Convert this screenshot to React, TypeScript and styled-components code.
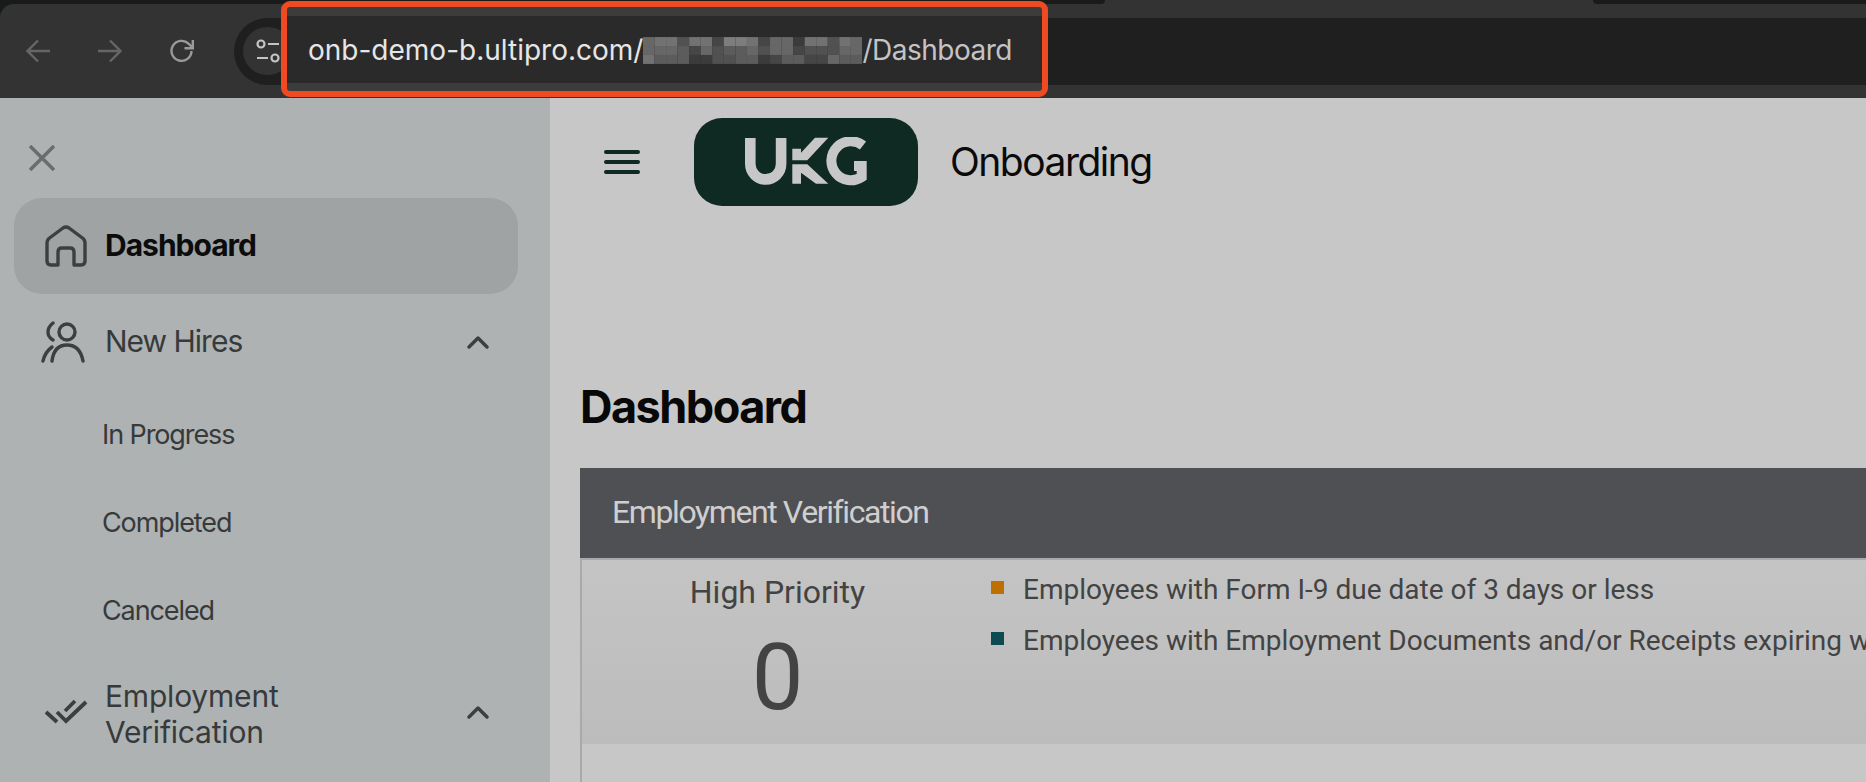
import React from 'react';
import styled, { createGlobalStyle } from 'styled-components';

const GlobalStyle = createGlobalStyle`
  html, body {
    margin: 0;
    padding: 0;
    height: 100%;
    overflow: hidden;
    background: #c7c7c7;
  }
  * {
    box-sizing: border-box;
  }
`;

const Page = styled.div`
  width: 1866px;
  height: 782px;
  display: flex;
  flex-direction: column;
  overflow: hidden;
`;

const BrowserBar = styled.div`
  height: 98px;
  flex-shrink: 0;
  background: #191b1b;
  display: flex;
  flex-direction: column;
`;

const TabEdge = styled.div`
  height: 4px;
  flex-shrink: 0;
  background: #333333;
  display: flex;
  justify-content: space-between;
`;

const TabPiece = styled.div<{ $width: number; $side: 'left' | 'right' }>`
  width: ${p => p.$width}px;
  background: #191b1b;
  border-radius: ${p => (p.$side === 'left' ? '0 0 4px 0' : '0 0 0 4px')};
`;

const Toolbar = styled.div`
  flex: 1;
  background: #333333;
  border-radius: 14px 0 0 0;
  display: flex;
  align-items: center;
  padding-left: 26px;
  position: relative;
`;

const NavIcon = styled.svg<{ $dim?: boolean }>`
  width: 24px;
  height: 24px;
  margin-right: 48px;
  fill: none;
  stroke: ${p => (p.$dim ? '#666666' : '#9a9a9a')};
  stroke-width: 2.4;
  flex-shrink: 0;
`;

const AddressBar = styled.div`
  flex: 1;
  height: 67px;
  margin-left: -8px;
  border-radius: 34px 0 0 34px;
  background: #1f1f1f;
  display: flex;
  align-items: center;
  padding-left: 9px;
`;

const SiteBadge = styled.div`
  width: 49px;
  height: 48px;
  border-radius: 50%;
  background: #333333;
  display: flex;
  align-items: center;
  justify-content: center;
  flex-shrink: 0;
`;

const Highlight = styled.div`
  position: absolute;
  left: 281px;
  top: -3px;
  width: 767px;
  height: 96px;
  border: 6px solid #f04a23;
  border-radius: 9px;
  background: linear-gradient(#3c3c3c 0 9px, #2a2a2a 9px 76px, #3c3c3c 76px);
  display: flex;
  align-items: center;
  padding: 2px 0 0 21px;
  font-family: Inter, 'Liberation Sans', sans-serif;
  font-size: 28px;
  color: #e6e6e6;
  white-space: nowrap;
`;

const UrlTail = styled.span`
  color: #c4c4c4;
  letter-spacing: -0.5px;
`;

const Mosaic = styled.svg`
  width: 219px;
  height: 27px;
  flex-shrink: 0;
`;

const Body = styled.div`
  flex: 1;
  display: flex;
  min-height: 0;
`;

const Sidebar = styled.aside`
  width: 550px;
  flex-shrink: 0;
  background: #aeb2b3;
  padding: 47px 32px 0 14px;
  font-family: Inter, 'Liberation Sans', sans-serif;
  color: #373a3a;
`;

const CloseIcon = styled.svg`
  display: block;
  width: 26px;
  height: 26px;
  margin: 0 0 27px 15px;
  stroke: #6a6d6d;
  stroke-width: 3.5;
  fill: none;
`;

const NavItem = styled.div<{ $active?: boolean; $tall?: boolean }>`
  height: ${p => (p.$tall ? '116px' : '96px')};
  border-radius: 28px;
  display: flex;
  align-items: center;
  gap: 17px;
  padding: 0 29px 0 27px;
  font-size: 30px;
  letter-spacing: ${p => (p.$tall ? '-0.2px' : '-1px')};
  line-height: 36px;
  background: ${p => (p.$active ? '#9fa3a4' : 'transparent')};
  color: ${p => (p.$active ? '#0c0c0c' : '#373a3a')};
  font-weight: ${p => (p.$active ? 700 : 400)};
`;

const NavGlyph = styled.svg`
  width: 50px;
  height: 50px;
  flex-shrink: 0;
  fill: none;
  stroke: #3c3f3f;
  stroke-width: 3.4;
  stroke-linecap: round;
  stroke-linejoin: round;
`;

const NavLabel = styled.span<{ $low?: boolean }>`
  flex: 1;
  margin-left: -3px;
  padding: ${p => (p.$low ? '3px 0 0' : '0 0 2px')};
`;

const Chevron = styled.svg`
  width: 22px;
  height: 14px;
  fill: none;
  stroke: #3c3f3f;
  stroke-width: 3.4;
  stroke-linecap: round;
  stroke-linejoin: round;
`;

const SubItem = styled.div`
  height: 88px;
  display: flex;
  align-items: center;
  padding-left: 88px;
  font-size: 27px;
  letter-spacing: -1.1px;
`;

const Main = styled.main`
  flex: 1;
  min-width: 0;
  overflow: hidden;
  padding: 20px 0 0 30px;
  font-family: Roboto, 'Liberation Sans', sans-serif;
`;

const AppHeader = styled.header`
  display: flex;
  align-items: center;
  height: 88px;
`;

const MenuIcon = styled.svg`
  width: 36px;
  height: 24px;
  margin: 0 54px 0 24px;
  stroke: #0f2a23;
  stroke-width: 4;
  stroke-linecap: round;
`;

const Logo = styled.div`
  width: 224px;
  height: 88px;
  border-radius: 28px;
  background: #0f2a23;
  display: flex;
  align-items: center;
  justify-content: center;
`;

const AppTitle = styled.div`
  margin-left: 32px;
  padding-bottom: 2px;
  font-family: Inter, 'Liberation Sans', sans-serif;
  font-size: 39px;
  letter-spacing: -1.5px;
  color: #0a0a0a;
`;

const PageTitle = styled.h1`
  margin: 177px 0 37px 0;
  height: 48px;
  line-height: 48px;
  font-family: Inter, 'Liberation Sans', sans-serif;
  font-size: 45px;
  font-weight: 700;
  letter-spacing: -1.5px;
  color: #080808;
`;

const Card = styled.section`
  border-left: 2px solid #a9a9a9;
  height: 400px;
`;

const CardHeader = styled.div`
  height: 92px;
  margin-left: -2px;
  padding: 0 0 2px 32px;
  background: #4f5054;
  border-bottom: 2px solid #a9a9a9;
  display: flex;
  align-items: center;
  font-size: 32px;
  letter-spacing: -1.4px;
  color: #cfcfcf;
`;

const CardBody = styled.div`
  height: 184px;
  background: linear-gradient(#c4c4c4, #bcbcbc);
  display: flex;
  color: #434343;
`;

const Priority = styled.div`
  width: 391px;
  flex-shrink: 0;
  display: flex;
  flex-direction: column;
  align-items: center;
  padding-top: 12px;
  margin-right: 18px;
`;

const PriorityLabel = styled.div`
  font-size: 32px;
  line-height: 40px;
`;

const PriorityCount = styled.div`
  margin-top: 16px;
  font-size: 92px;
  line-height: 100px;
`;

const Legend = styled.ul`
  list-style: none;
  margin: 0;
  padding: 4px 0 0 0;
  min-width: 0;
  white-space: nowrap;
`;

const LegendRow = styled.li`
  display: flex;
  align-items: center;
  height: 51px;
  gap: 19px;
  font-size: 28px;
`;

const LegendMark = styled.span<{ $color: string }>`
  width: 13px;
  height: 13px;
  margin-bottom: 5px;
  flex-shrink: 0;
  background: ${p => p.$color};
`;

const MOSAIC_ROWS = [
  [5, 6, 6, 3, 6, 6, 2, 7, 7, 6, 2, 5, 5, 1, 6, 6, 3, 6, 5],
  [5, 5, 5, 4, 2, 5, 3, 4, 4, 5, 3, 5, 5, 2, 3, 3, 3, 5, 5],
  [6, 4, 4, 4, 1, 1, 3, 3, 4, 4, 1, 2, 4, 4, 2, 2, 5, 4, 4],
];

const mosaicColor = (level: number) => {
  const grey = 0x30 + level * 11;
  return `rgb(${grey},${grey},${grey})`;
};

export default function App() {
  return (
    <Page>
      <GlobalStyle />
      <BrowserBar>
        <TabEdge>
          <TabPiece $side="left" $width={1105} />
          <TabPiece $side="right" $width={273} />
        </TabEdge>
        <Toolbar>
          <NavIcon viewBox="0 0 24 24" $dim>
            <path d="M24 12H2M12 1.5 1.5 12 12 22.5" />
          </NavIcon>
          <NavIcon viewBox="0 0 24 24" $dim>
            <path d="M0 12h22M12 1.5 22.5 12 12 22.5" />
          </NavIcon>
          <NavIcon viewBox="0 0 24 24">
            <path d="M21.5 12a10 10 0 1 1-3-7.3l4 3.8M22.8 1v8.3h-8.3" />
          </NavIcon>
          <AddressBar>
            <SiteBadge>
              <svg width="26" height="26" viewBox="0 0 26 26" fill="none" stroke="#c4c4c4" strokeWidth="2.2">
                <circle cx="6" cy="6" r="3.5" />
                <path d="M13 6h11M2 20h11" />
                <circle cx="20" cy="20" r="3.5" />
              </svg>
            </SiteBadge>
          </AddressBar>
          <Highlight>
            onb-demo-b.ultipro.com/
            <Mosaic viewBox="0 0 220 27">
              {MOSAIC_ROWS.map((row, y) =>
                row.map((level, x) => (
                  <rect key={`${x}-${y}`} x={x * 11.6} y={y * 9} width="11.6" height="9" fill={mosaicColor(level)} />
                )),
              )}
            </Mosaic>
            <UrlTail>/Dashboard</UrlTail>
          </Highlight>
        </Toolbar>
      </BrowserBar>
      <Body>
        <Sidebar>
          <CloseIcon viewBox="0 0 26 26">
            <path d="M1 1l24 24M25 1 1 25" />
          </CloseIcon>
          <NavItem $active>
            <NavGlyph viewBox="0 0 50 50">
              <path d="M6 22Q6 19 8.500 17L22 7Q25 5 28 7L41.500 17Q44 19 44 22V40Q44 44 40 44H33V31Q33 27 29 27H21Q17 27 17 31V44H10Q6 44 6 40Z" />
            </NavGlyph>
            <NavLabel>Dashboard</NavLabel>
          </NavItem>
          <NavItem>
            <NavGlyph viewBox="0 0 50 50">
              <circle cx="26" cy="15" r="8" />
              <path d="M12 6Q7 10 7 15Q7 20 12 23M11 44Q13 28 26 28Q39 28 42 44M2 44Q4 35 11 30" />
            </NavGlyph>
            <NavLabel>New Hires</NavLabel>
            <Chevron viewBox="0 0 22 14">
              <path d="M2 12 11 3l9 9" />
            </Chevron>
          </NavItem>
          <SubItem>In Progress</SubItem>
          <SubItem>Completed</SubItem>
          <SubItem>Canceled</SubItem>
          <NavItem $tall>
            <NavGlyph viewBox="0 0 50 50">
              <path strokeLinecap="butt" strokeLinejoin="miter" strokeWidth="3.8" d="M5 25 16 35M16 25l9 9 20-19M24 24 34 14" />
            </NavGlyph>
            <NavLabel $low>
              Employment
              <br />
              Verification
            </NavLabel>
            <Chevron viewBox="0 0 22 14">
              <path d="M2 12 11 3l9 9" />
            </Chevron>
          </NavItem>
        </Sidebar>
        <Main>
          <AppHeader>
            <MenuIcon viewBox="0 0 36 24">
              <path d="M2 2h32M2 12h32M2 22h32" />
            </MenuIcon>
            <Logo>
              <svg width="124" height="50" viewBox="0 0 124 50">
                <path fill="none" stroke="#c7c7c7" strokeWidth="10.600" d="M6.300 1V27a15.400 15.400 0 0 0 30.800 0V1" />
                <polygon fill="#c7c7c7" points="48.300,11.700 57,11.700 57,15.700 71,0.700 84.300,0.700 63.300,23.300 48.300,23.300" />
                <polygon fill="#c7c7c7" points="48.300,27.300 63.300,27.300 84.300,46.700 72,46.700 57,35.700 57,46.700 48.300,46.700" />
                <path fill="none" stroke="#c7c7c7" strokeWidth="10" d="M119 8.500A19.500 19.500 0 1 0 117.700 40V29H110" />
              </svg>
            </Logo>
            <AppTitle>Onboarding</AppTitle>
          </AppHeader>
          <PageTitle>Dashboard</PageTitle>
          <Card>
            <CardHeader>Employment Verification</CardHeader>
            <CardBody>
              <Priority>
                <PriorityLabel>High Priority</PriorityLabel>
                <PriorityCount>0</PriorityCount>
              </Priority>
              <Legend>
                <LegendRow>
                  <LegendMark $color="#bd6f00" />
                  Employees with Form I-9 due date of 3 days or less
                </LegendRow>
                <LegendRow>
                  <LegendMark $color="#0c4b52" />
                  Employees with Employment Documents and/or Receipts expiring within 30 days
                </LegendRow>
              </Legend>
            </CardBody>
          </Card>
        </Main>
      </Body>
    </Page>
  );
}
